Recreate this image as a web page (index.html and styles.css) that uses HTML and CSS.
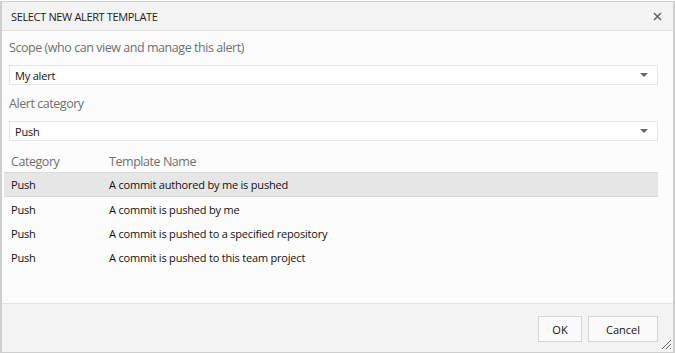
FILE: index.html
```html
<!DOCTYPE html>
<html>
<head>
<meta charset="utf-8">
<link rel="stylesheet" href="styles.css">
</head>
<body>
<div class="dialog">
  <div class="titlebar">
    <span class="title">SELECT NEW ALERT TEMPLATE</span>
    <span class="close"><svg width="9" height="9" viewBox="0 0 9 9"><path d="M1 1L8 8M8 1L1 8" stroke="#666" stroke-width="1.6"/></svg></span>
  </div>
  <div class="body">
    <div class="label">Scope (who can view and manage this alert)</div>
    <div class="select"><span>My alert</span><span class="arrow"></span></div>
    <div class="label">Alert category</div>
    <div class="select"><span>Push</span><span class="arrow"></span></div>
    <div class="grid">
      <div class="row head"><span class="c1">Category</span><span class="c2">Template Name</span></div>
      <div class="row sel"><span class="c1">Push</span><span class="c2">A commit authored by me is pushed</span></div>
      <div class="row"><span class="c1">Push</span><span class="c2">A commit is pushed by me</span></div>
      <div class="row"><span class="c1">Push</span><span class="c2">A commit is pushed to a specified repository</span></div>
      <div class="row"><span class="c1">Push</span><span class="c2">A commit is pushed to this team project</span></div>
    </div>
  </div>
  <div class="footer">
    <button class="btn ok">OK</button>
    <button class="btn cancel">Cancel</button>
    <svg class="grip" width="12" height="12" viewBox="0 0 12 12"><path d="M11 2L2 11M11 6L6 11M11 10L10 11" stroke="#666" stroke-width="1"/></svg>
  </div>
</div>
</body>
</html>
```
FILE: styles.css
```css
html, body { margin: 0; padding: 0; }
body { width: 675px; height: 353px; background: #fff; font-family: "Open Sans", "Noto Sans", sans-serif; overflow: hidden; }
.dialog {
  box-sizing: border-box; width: 675px;
  margin-top: 1px; height: 352px;
  border: 1px solid #cfcfcf; border-left-width: 2px; border-right-width: 2px;
  background: #fcfcfc; display: flex; flex-direction: column;
}
.titlebar {
  height: 29px; box-sizing: border-box; background: #f3f3f3;
  border-bottom: 1px solid #e1e1e1;
  display: flex; align-items: center; justify-content: space-between;
  padding: 0 11px 0 9px;
}
.title { font-size: 11px; color: #222; letter-spacing: -0.35px; }
.close { display: flex; }
.body { flex: 1; padding: 6px 15px 0 7px; }
.label { font-size: 12.5px; color: #707070; height: 21px; line-height: 20px; margin-top: 1px; letter-spacing: -0.45px; }
.select {
  height: 20px; box-sizing: border-box; border: 1px solid #e6e6e6; background: #fff;
  display: flex; align-items: center; justify-content: space-between;
  padding: 0 9px 0 5px; font-size: 11px; color: #111; margin: 6px 0 9px 0; letter-spacing: -0.2px;
}
.arrow { width: 0; height: 0; border-left: 4px solid transparent; border-right: 4px solid transparent; border-top: 4px solid #666; }
.grid { margin-top: 0px; margin-left: -5px; }
.row { height: 24px; display: flex; align-items: center; font-size: 11px; color: #111; box-sizing: border-box; letter-spacing: -0.2px; }
.row .c1 { width: 98px; padding-left: 7px; }
.row.head { font-size: 12.5px; color: #707070; height: 22px; letter-spacing: -0.45px; }
.row.sel { background: #e6e6e6; border-top: 1px solid #dadada; border-bottom: 1px solid #dadada; height: 25px; }
.footer {
  height: 49px; box-sizing: border-box; background: #f3f3f3; border-top: 1px solid #e3e3e3;
  display: flex; align-items: flex-start; justify-content: flex-end;
  padding: 12px 15px 0 0; gap: 6px; position: relative;
}
.btn {
  height: 26px; box-sizing: border-box; border: 1px solid #d4d4d4; background: #fafafa;
  font-family: "Open Sans", "Noto Sans", sans-serif; font-size: 11px; color: #111; padding: 0;
}
.ok { width: 44px; }
.cancel { width: 70px; }
.grip { position: absolute; right: 1px; bottom: 2px; }
```
